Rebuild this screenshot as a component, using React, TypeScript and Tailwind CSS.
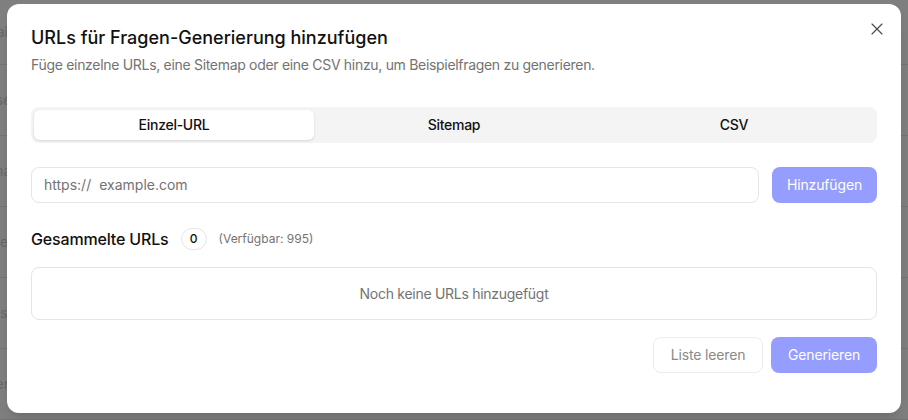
import { X } from "lucide-react";

const TABS = ["Einzel-URL", "Sitemap", "CSV"];

function BackgroundPage() {
  // the page behind the dialog; only a sliver of it shows at the left edge
  const rows = ["Domain", "Webseite", "Sitemap", "Quelle", "Status", "Fragen"];
  return (
    <div className="min-h-[420px] bg-white">
      {rows.map((r) => (
        <div
          key={r}
          className="flex h-[71px] items-center border-b border-[#e6e6e6] text-sm text-[#cfcfcf] first:h-[65px]"
        >
          <span className="-ml-[34px]">{r}</span>
        </div>
      ))}
    </div>
  );
}

export default function App() {
  return (
    <div
      className="relative h-[420px] w-[908px] overflow-hidden"
      style={{ fontFamily: "Inter, 'Noto Sans', sans-serif" }}
    >
      <BackgroundPage />
      <div className="absolute inset-0 bg-black/50" />

      <div className="absolute left-[7px] top-[4px] flex h-[409px] w-[894px] flex-col rounded-xl bg-white px-6 pt-5 shadow-lg">
        <button
          type="button"
          aria-label="Schließen"
          className="absolute right-[14px] top-[15px] text-[#4b4b4b]"
        >
          <X className="size-5" strokeWidth={1.4} />
        </button>

        <h2 className="text-lg font-medium leading-7 text-[#111]">
          URLs für Fragen-Generierung hinzufügen
        </h2>
        <p className="mt-[3px] text-sm leading-5 tracking-[-0.022em] text-[#737373]">
          Füge einzelne URLs, eine Sitemap oder eine CSV hinzu, um Beispielfragen zu generieren.
        </p>

        <div className="mt-8 grid h-9 grid-cols-3 rounded-lg bg-[#f4f4f5] p-[3px]">
          {TABS.map((t, i) => (
            <button
              key={t}
              type="button"
              className={
                i === 0
                  ? "rounded-md bg-white text-sm font-medium tracking-[-0.02em] text-[#111] shadow-sm"
                  : "rounded-md text-sm font-medium tracking-[-0.02em] text-[#111]"
              }
            >
              {t}
            </button>
          ))}
        </div>

        <div className="mt-6 flex gap-[13px]">
          <div className="flex h-9 flex-1 items-center rounded-lg border border-[#e5e5e5] px-3 text-sm text-[#737373]">
            <span>https://</span>
            <span className="ml-2">example.com</span>
          </div>
          <button
            type="button"
            className="h-9 w-[105px] rounded-lg bg-[#959dfe] text-sm tracking-[-0.01em] text-white"
          >
            Hinzufügen
          </button>
        </div>

        <div className="mt-[25px] flex h-[22px] items-center">
          <span className="text-base font-medium tracking-[-0.01em] text-[#111]">Gesammelte URLs</span>
          <span className="ml-3 flex h-[22px] w-[26px] items-center justify-center rounded-full border border-[#e5e5e5] text-xs font-medium text-[#111]">
            0
          </span>
          <span className="ml-3 text-xs text-[#737373]">(Verfügbar: 995)</span>
        </div>

        <div className="mt-[17px] flex h-[53px] items-center justify-center rounded-lg border border-[#e5e5e5] text-sm tracking-[-0.02em] text-[#737373]">
          Noch keine URLs hinzugefügt
        </div>

        <div className="mt-[17px] flex justify-end gap-2">
          <button
            type="button"
            className="h-9 w-[110px] rounded-lg border border-[#ececec] bg-white text-sm tracking-[-0.01em] text-[#8a8a8a]"
          >
            Liste leeren
          </button>
          <button
            type="button"
            className="h-9 w-[106px] rounded-lg bg-[#959dfe] text-sm tracking-[-0.01em] text-white"
          >
            Generieren
          </button>
        </div>
      </div>
    </div>
  );
}
